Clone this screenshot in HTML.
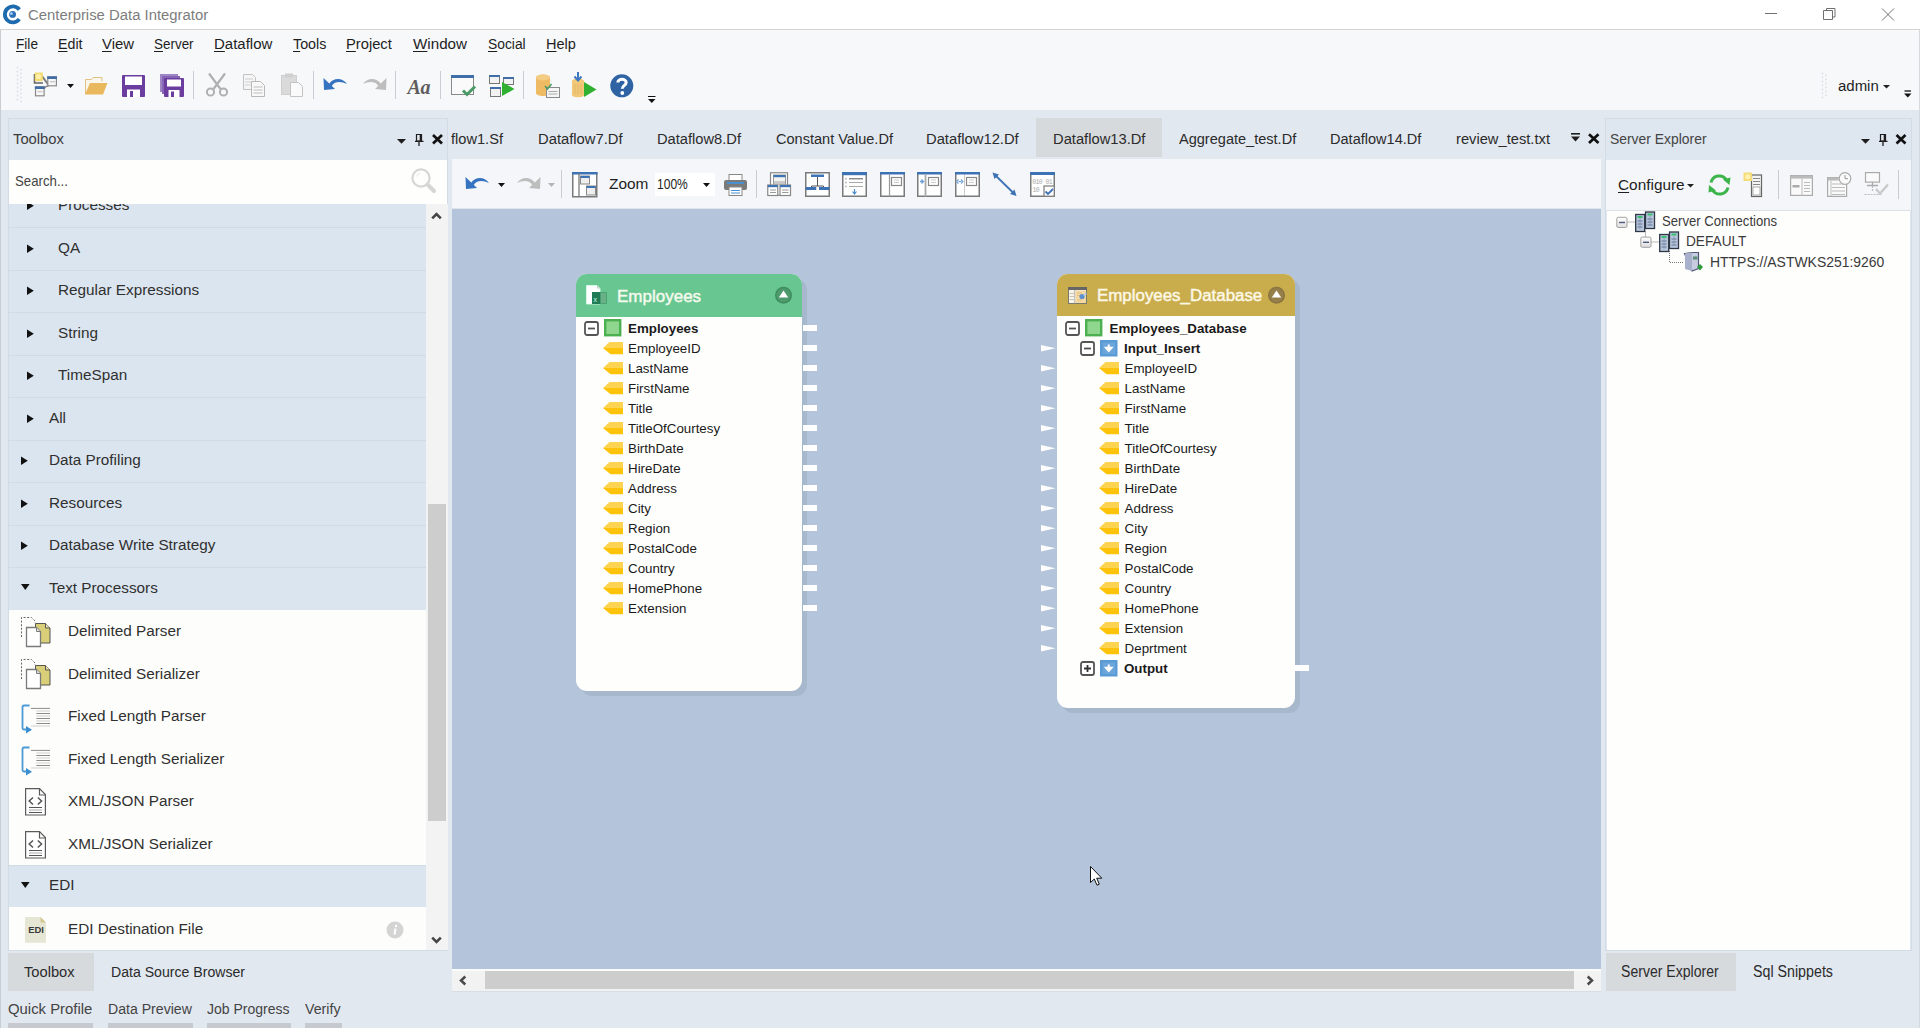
<!DOCTYPE html>
<html><head><meta charset="utf-8">
<style>
*{margin:0;padding:0;box-sizing:border-box}
html,body{width:1920px;height:1028px;overflow:hidden}
body{position:relative;background:#e2e8f0;font-family:"Liberation Sans",sans-serif;color:#1e1e1e}
.a{position:absolute}
.t{position:absolute;white-space:nowrap;line-height:1}
svg{position:absolute;overflow:visible}
u{text-decoration:underline;text-underline-offset:2px;text-decoration-thickness:1px}
</style></head><body>

<!-- TITLE BAR -->
<div class="a" style="left:0;top:0;width:1920px;height:29px;background:#fff"></div>
<div class="a" style="left:0;top:29px;width:1920px;height:1px;background:#d4d4d4"></div>
<svg style="left:3px;top:5px" width="19" height="19" viewBox="0 0 19 19">
 <path d="M16.3 4.6 A8 8 0 1 0 16.3 14.2" fill="none" stroke="#1d6aae" stroke-width="3.8"/>
 <circle cx="9.6" cy="9.4" r="3.4" fill="#2c6fb5"/><circle cx="8.4" cy="8.6" r="1.5" fill="#9cc8ec"/>
</svg>
<div class="t" style="left:27.80px;top:8.32px;font-size:14.27px;color:#7d7d7d;transform:scaleX(1.0424);transform-origin:0 0">Centerprise Data Integrator</div>
<svg style="left:1765px;top:8px" width="130" height="13" viewBox="0 0 130 13">
 <path d="M0 5.5H12" stroke="#707070" stroke-width="1" fill="none"/>
 <path d="M58.5 2.5h9v9h-9z M61.5 2.5V0.5h8.5v8.5h-2" stroke="#707070" stroke-width="1" fill="none"/>
 <path d="M117 0.5L129 12.5M129 0.5L117 12.5" stroke="#707070" stroke-width="1" fill="none"/>
</svg>

<!-- MENU + TOOLBAR -->
<div class="a" style="left:1919px;top:30px;width:1px;height:998px;background:#d6d9dd;z-index:5"></div>
<div class="a" style="left:0;top:30px;width:1920px;height:80px;background:#f7f8fa"></div>
<div class="a" style="left:0;top:30px;width:1px;height:998px;background:#c9ccd1"></div>
<div id="menu" style="font-size:15px;color:#1e1e1e">
 <div class="t" style="left:15.50px;top:36.98px;font-size:14.68px;color:#1e1e1e;transform:scaleX(0.9302);transform-origin:0 0"><u>F</u>ile</div>
 <div class="t" style="left:57.50px;top:36.98px;font-size:14.68px;color:#1e1e1e;transform:scaleX(0.9687);transform-origin:0 0"><u>E</u>dit</div>
 <div class="t" style="left:102.00px;top:36.98px;font-size:14.68px;color:#1e1e1e;transform:scaleX(1.0143);transform-origin:0 0"><u>V</u>iew</div>
 <div class="t" style="left:154.00px;top:36.98px;font-size:14.68px;color:#1e1e1e;transform:scaleX(0.9160);transform-origin:0 0"><u>S</u>erver</div>
 <div class="t" style="left:214.00px;top:36.98px;font-size:14.68px;color:#1e1e1e;transform:scaleX(1.0209);transform-origin:0 0"><u>D</u>ataflow</div>
 <div class="t" style="left:292.60px;top:36.98px;font-size:14.68px;color:#1e1e1e;transform:scaleX(0.9748);transform-origin:0 0"><u>T</u>ools</div>
 <div class="t" style="left:346.25px;top:36.98px;font-size:14.68px;color:#1e1e1e;transform:scaleX(1.0026);transform-origin:0 0"><u>P</u>roject</div>
 <div class="t" style="left:413.00px;top:36.98px;font-size:14.68px;color:#1e1e1e;transform:scaleX(1.0344);transform-origin:0 0"><u>W</u>indow</div>
 <div class="t" style="left:487.80px;top:36.98px;font-size:14.68px;color:#1e1e1e;transform:scaleX(0.9430);transform-origin:0 0"><u>S</u>ocial</div>
 <div class="t" style="left:546.40px;top:36.98px;font-size:14.68px;color:#1e1e1e;transform:scaleX(0.9905);transform-origin:0 0"><u>H</u>elp</div>
</div>

<!--TOOLBAR-->
<!-- grip -->
<svg style="left:16px;top:66px" width="7" height="37" viewBox="0 0 7 37">
 <g fill="#dcdfe4"><circle cx="1.5" cy="1.5" r="0.9"/><circle cx="5" cy="3.5" r="0.9"/><circle cx="1.5" cy="5.5" r="0.9"/><circle cx="5" cy="7.5" r="0.9"/><circle cx="1.5" cy="9.5" r="0.9"/><circle cx="5" cy="11.5" r="0.9"/><circle cx="1.5" cy="13.5" r="0.9"/><circle cx="5" cy="15.5" r="0.9"/><circle cx="1.5" cy="17.5" r="0.9"/><circle cx="5" cy="19.5" r="0.9"/><circle cx="1.5" cy="21.5" r="0.9"/><circle cx="5" cy="23.5" r="0.9"/><circle cx="1.5" cy="25.5" r="0.9"/><circle cx="5" cy="27.5" r="0.9"/><circle cx="1.5" cy="29.5" r="0.9"/><circle cx="5" cy="31.5" r="0.9"/><circle cx="1.5" cy="33.5" r="0.9"/><circle cx="5" cy="35.5" r="0.9"/></g>
</svg>
<!-- new -->
<svg style="left:33px;top:72px" width="25" height="25" viewBox="0 0 25 25">
 <path d="M9 4L15.5 13" stroke="#7a7a7a" stroke-width="2" fill="none"/>
 <path d="M11 16.5Q12.5 14 15.5 14" stroke="#8a8a8a" stroke-width="1.6" fill="none"/>
 <path d="M1.5 2V11h8.5" fill="#ececec" stroke="#666" stroke-width="1.6"/>
 <rect x="1.8" y="0.5" width="8" height="8.5" fill="#f3dc72"/><circle cx="5.5" cy="4.5" r="2.6" fill="#fff0a8"/>
 <rect x="14.8" y="4.8" width="8.6" height="9" fill="#f8f8f8" stroke="#8a8a8a" stroke-width="1.2"/><rect x="14.2" y="4.4" width="9.8" height="2.6" fill="#3f6ea8"/>
 <rect x="2.5" y="14.8" width="8.6" height="9" fill="#f8f8f8" stroke="#8a8a8a" stroke-width="1.2"/><rect x="1.9" y="14.4" width="9.8" height="2.6" fill="#3f6ea8"/>
 <rect x="4.5" y="19" width="5" height="1.3" fill="#c8c8c8"/><rect x="17" y="9" width="5" height="1.3" fill="#c8c8c8"/>
</svg>
<svg style="left:67px;top:84px" width="8" height="5" viewBox="0 0 8 5"><path d="M0 0H7L3.5 4z" fill="#111"/></svg>
<!-- open folder -->
<svg style="left:84px;top:76px" width="24" height="19" viewBox="0 0 24 19">
 <path d="M1.5 18V3.5h6l1.5-2h9v4" fill="#fbf6ec" stroke="#e2c184" stroke-width="1"/>
 <path d="M1 18.5L6 7h17.5L19 18.5z" fill="#e9b75c"/>
</svg>
<!-- save -->
<svg style="left:122px;top:75px" width="23" height="22" viewBox="0 0 23 22">
 <rect x="0" y="0" width="23" height="22" rx="1" fill="#6b3d9e"/>
 <rect x="3" y="1.5" width="17" height="8.5" fill="#fff"/>
 <rect x="5" y="14.5" width="13" height="7.5" fill="#fff"/><rect x="8" y="16" width="3" height="6" fill="#6b3d9e"/>
</svg>
<!-- save all -->
<svg style="left:160px;top:74px" width="24" height="23" viewBox="0 0 24 23">
 <rect x="0" y="0" width="18" height="18" fill="#9f86c4"/>
 <rect x="2" y="2" width="18" height="18" fill="#8566b5"/>
 <rect x="4" y="4" width="20" height="19" rx="1" fill="#6b3d9e"/>
 <rect x="7" y="5.5" width="14" height="7" fill="#fff"/>
 <rect x="8.5" y="16" width="11" height="7" fill="#fff"/><rect x="11" y="17.5" width="3" height="5.5" fill="#6b3d9e"/>
</svg>
<div class="a" style="left:193px;top:71px;width:1px;height:28px;background:#c9ccd2"></div>
<!-- cut -->
<svg style="left:205px;top:73px" width="24" height="24" viewBox="0 0 24 24">
 <path d="M4 0.5L15.5 16M20 0.5L8.5 16" stroke="#b0b0b0" stroke-width="2.2" fill="none"/>
 <circle cx="5.5" cy="19" r="3.6" fill="none" stroke="#b0b0b0" stroke-width="2"/>
 <circle cx="18.5" cy="19" r="3.6" fill="none" stroke="#b0b0b0" stroke-width="2"/>
</svg>
<!-- copy -->
<svg style="left:243px;top:74px" width="23" height="23" viewBox="0 0 23 23">
 <path d="M0.5 0.5h9l3 3v12h-12z" fill="#f6f6f6" stroke="#c2c2c2"/>
 <path d="M2 5h8M2 8h8M2 11h8" stroke="#d0d0d0"/>
 <path d="M8.5 7.5h9l4 4v11h-13z" fill="#f8f8f8" stroke="#b8b8b8"/>
 <path d="M10.5 13h9M10.5 16h9M10.5 19h9" stroke="#bfbfbf"/>
</svg>
<!-- paste -->
<svg style="left:281px;top:73px" width="23" height="24" viewBox="0 0 23 24">
 <rect x="0.5" y="2.5" width="15" height="19" fill="#dadada" stroke="#cfcfcf"/>
 <rect x="4" y="0.5" width="8" height="4" fill="#cfcfcf"/>
 <path d="M9.5 9.5h8l4 4v10h-12z" fill="#fafafa" stroke="#c4c4c4"/>
</svg>
<div class="a" style="left:313px;top:71px;width:1px;height:28px;background:#c9ccd2"></div>
<!-- undo -->
<svg style="left:323px;top:76px" width="25" height="15" viewBox="0 0 25 15">
 <path d="M6 8 C10 2 19 1 24 8 C18 5 11 5 8.5 10.5z" fill="#3573c0"/>
 <path d="M0.5 2 L1 14 L12 13z" fill="#3573c0"/>
</svg>
<!-- redo -->
<svg style="left:362px;top:76px" width="25" height="15" viewBox="0 0 25 15">
 <path d="M19 8 C15 2 6 1 1 8 C7 5 14 5 16.5 10.5z" fill="#bdbdbd"/>
 <path d="M24.5 2 L24 14 L13 13z" fill="#bdbdbd"/>
</svg>
<div class="a" style="left:395px;top:71px;width:1px;height:28px;background:#c9ccd2"></div>
<div class="t" style="left:407.5px;top:77px;font-family:'Liberation Serif',serif;font-style:italic;font-weight:bold;font-size:20px;color:#5e5e5e;letter-spacing:-0.3px">Aa</div>
<div class="a" style="left:440px;top:71px;width:1px;height:28px;background:#c9ccd2"></div>
<!-- verify -->
<svg style="left:451px;top:75px" width="25" height="22" viewBox="0 0 25 22">
 <rect x="0.5" y="0.5" width="22" height="19" fill="#fafafa" stroke="#8a8a8a"/>
 <rect x="0" y="0" width="23" height="3" fill="#3f6ea8"/>
 <path d="M12 15.5l4 4l8-8" stroke="#4a9a68" stroke-width="3" fill="none"/>
</svg>
<!-- run -->
<svg style="left:489px;top:75px" width="26" height="22" viewBox="0 0 26 22">
 <rect x="0.5" y="0.5" width="10" height="8" fill="#f2f2f2" stroke="#777"/><rect x="0" y="0" width="11" height="2" fill="#3f6ea8"/>
 <rect x="14.5" y="2.5" width="10" height="7" fill="#f2f2f2" stroke="#777"/><rect x="14" y="2" width="11" height="2" fill="#3f6ea8"/>
 <rect x="1.5" y="12.5" width="10" height="9" fill="#f2f2f2" stroke="#777"/><rect x="1" y="12" width="11" height="2" fill="#3f6ea8"/>
 <path d="M13 7L25.5 14L13 21z" fill="#2fb030"/>
</svg>
<div class="a" style="left:523px;top:71px;width:1px;height:28px;background:#c9ccd2"></div>
<!-- db -->
<svg style="left:536px;top:74px" width="24" height="24" viewBox="0 0 24 24">
 <path d="M0 3.5 C0 -0.5 14 -0.5 14 3.5 V19 C14 23 0 23 0 19z" fill="#eebb62"/>
 <ellipse cx="7" cy="3.5" rx="7" ry="3" fill="#f4cc84"/>
 <rect x="10.5" y="13.5" width="13" height="10" fill="#f6f6f6" stroke="#8a8a8a"/>
 <path d="M12.5 17.5h9M12.5 20h9" stroke="#aaa"/>
 <path d="M9 12l2.5 3l4-5" stroke="#4a9a68" stroke-width="1.6" fill="none"/>
</svg>
<!-- transfer -->
<svg style="left:572px;top:72px" width="25" height="26" viewBox="0 0 25 26">
 <path d="M0 9 C0 6 12 6 12 9 V23 C12 26 0 26 0 23z" fill="#f0c878"/>
 <path d="M3 12v10M6 12v10M9 12v10" stroke="#e0b060" stroke-width="0.8"/>
 <path d="M6 0v8M2.5 4.5L6 8.5L9.5 4.5" stroke="#3f78c0" stroke-width="2" fill="none"/>
 <path d="M12 10L24.5 17.5L12 25z" fill="#2fb030"/>
</svg>
<!-- help -->
<svg style="left:610px;top:74px" width="24" height="24" viewBox="0 0 24 24">
 <circle cx="11.8" cy="11.8" r="11.5" fill="#2f63a4"/>
 <path d="M7.8 8.6 C7.8 4.2 16.2 4.2 16.2 8.6 C16.2 11.5 12.3 11.4 12.3 14.8" stroke="#fff" stroke-width="3" fill="none"/>
 <circle cx="12.3" cy="19" r="1.9" fill="#fff"/>
</svg>
<svg style="left:648px;top:96px" width="8" height="9" viewBox="0 0 8 9"><path d="M0 0.5H7.5" stroke="#111" stroke-width="1"/><path d="M0 3H7.5L3.75 7z" fill="#111"/></svg>

<!-- right side admin -->
<svg style="left:1821px;top:72px" width="7" height="27" viewBox="0 0 7 27">
 <g fill="#dde0e5"><circle cx="1.5" cy="1.5" r="0.9"/><circle cx="5" cy="3.5" r="0.9"/><circle cx="1.5" cy="5.5" r="0.9"/><circle cx="5" cy="7.5" r="0.9"/><circle cx="1.5" cy="9.5" r="0.9"/><circle cx="5" cy="11.5" r="0.9"/><circle cx="1.5" cy="13.5" r="0.9"/><circle cx="5" cy="15.5" r="0.9"/><circle cx="1.5" cy="17.5" r="0.9"/><circle cx="5" cy="19.5" r="0.9"/><circle cx="1.5" cy="21.5" r="0.9"/><circle cx="5" cy="23.5" r="0.9"/><circle cx="1.5" cy="25.5" r="0.9"/></g>
</svg>
<div class="t" style="left:1838.20px;top:77.63px;font-size:15.09px;color:#1e1e1e;transform:scaleX(0.9928);transform-origin:0 0">admin</div>
<svg style="left:1883px;top:85px" width="8" height="5" viewBox="0 0 8 5"><path d="M0 0H7L3.5 3.5z" fill="#222"/></svg>
<svg style="left:1904px;top:90px" width="8" height="9" viewBox="0 0 8 9"><path d="M0.5 1H7" stroke="#111" stroke-width="1.3"/><path d="M0 3.5H7.5L3.75 7.5z" fill="#111"/></svg>


<!--TOOLBOX-->
<!-- TOOLBOX PANEL -->
<div class="a" style="left:8px;top:118px;width:440px;height:833px;background:#dee6ef;border:1px solid #d3dbe4"></div>
<div class="t" style="left:13.00px;top:131.45px;font-size:15.29px;color:#3c3c3c;transform:scaleX(0.9674);transform-origin:0 0">Toolbox</div>
<svg style="left:397px;top:134px" width="46" height="12" viewBox="0 0 46 12">
 <path d="M0 5H9L4.5 9.8z" fill="#1e1e1e"/>
 <path d="M19.5 0.5h5v6.5h-5z" fill="none" stroke="#1e1e1e" stroke-width="1.2"/><path d="M23.5 0.5v6.5" stroke="#1e1e1e" stroke-width="1.6"/>
 <path d="M18 7.3h8.5M22 7.3v4.7" stroke="#1e1e1e" stroke-width="1.3"/>
 <path d="M36 1L45 9.5M45 1L36 9.5" stroke="#111" stroke-width="2.7"/>
</svg>
<!-- search -->
<div class="a" style="left:9px;top:160px;width:438px;height:44px;background:#fefefd"></div>
<div class="t" style="left:15.20px;top:173.86px;font-size:14.81px;color:#444;transform:scaleX(0.8939);transform-origin:0 0">Search...</div>
<svg style="left:410px;top:167px" width="28" height="28" viewBox="0 0 28 28">
 <circle cx="11" cy="11" r="8.6" fill="none" stroke="#d6d6d6" stroke-width="2.2"/>
 <path d="M17.5 17.5L24 24" stroke="#d6d6d6" stroke-width="4" stroke-linecap="round"/>
 <path d="M6.5 9.5 A5 5 0 0 1 10 6" stroke="#e6e6e6" stroke-width="1" fill="none"/>
</svg>
<!-- list -->
<div class="a" style="left:9px;top:204px;width:417px;height:746px;overflow:hidden">
 <div id="tlist" class="a" style="left:0;top:-19.5px;width:417px;font-size:15.3px;color:#303030">
<div class="a" style="position:relative;height:42.5px;background:#dbe5ef;border-top:1px solid #d2dbe3"><svg style="left:18px;top:15.5px" width="8" height="10" viewBox="0 0 8 10"><path d="M0 0.5L6.8 4.8L0 9.1z" fill="#111"/></svg><div class="t" style="left:49px;top:11.5px">Processes</div></div>
<div class="a" style="position:relative;height:42.5px;background:#dbe5ef;border-top:1px solid #d2dbe3"><svg style="left:18px;top:15.5px" width="8" height="10" viewBox="0 0 8 10"><path d="M0 0.5L6.8 4.8L0 9.1z" fill="#111"/></svg><div class="t" style="left:49px;top:11.5px">QA</div></div>
<div class="a" style="position:relative;height:42.5px;background:#dbe5ef;border-top:1px solid #d2dbe3"><svg style="left:18px;top:15.5px" width="8" height="10" viewBox="0 0 8 10"><path d="M0 0.5L6.8 4.8L0 9.1z" fill="#111"/></svg><div class="t" style="left:49px;top:11.5px">Regular Expressions</div></div>
<div class="a" style="position:relative;height:42.5px;background:#dbe5ef;border-top:1px solid #d2dbe3"><svg style="left:18px;top:15.5px" width="8" height="10" viewBox="0 0 8 10"><path d="M0 0.5L6.8 4.8L0 9.1z" fill="#111"/></svg><div class="t" style="left:49px;top:11.5px">String</div></div>
<div class="a" style="position:relative;height:42.5px;background:#dbe5ef;border-top:1px solid #d2dbe3"><svg style="left:18px;top:15.5px" width="8" height="10" viewBox="0 0 8 10"><path d="M0 0.5L6.8 4.8L0 9.1z" fill="#111"/></svg><div class="t" style="left:49px;top:11.5px">TimeSpan</div></div>
<div class="a" style="position:relative;height:42.5px;background:#dbe5ef;border-top:1px solid #d2dbe3"><svg style="left:18px;top:15.5px" width="8" height="10" viewBox="0 0 8 10"><path d="M0 0.5L6.8 4.8L0 9.1z" fill="#111"/></svg><div class="t" style="left:40px;top:11.5px">All</div></div>
<div class="a" style="position:relative;height:42.5px;background:#dbe5ef;border-top:1px solid #d2dbe3"><svg style="left:12px;top:15.5px" width="8" height="10" viewBox="0 0 8 10"><path d="M0 0.5L6.8 4.8L0 9.1z" fill="#111"/></svg><div class="t" style="left:40px;top:11.5px">Data Profiling</div></div>
<div class="a" style="position:relative;height:42.5px;background:#dbe5ef;border-top:1px solid #d2dbe3"><svg style="left:12px;top:15.5px" width="8" height="10" viewBox="0 0 8 10"><path d="M0 0.5L6.8 4.8L0 9.1z" fill="#111"/></svg><div class="t" style="left:40px;top:11.5px">Resources</div></div>
<div class="a" style="position:relative;height:42.5px;background:#dbe5ef;border-top:1px solid #d2dbe3"><svg style="left:12px;top:15.5px" width="8" height="10" viewBox="0 0 8 10"><path d="M0 0.5L6.8 4.8L0 9.1z" fill="#111"/></svg><div class="t" style="left:40px;top:11.5px">Database Write Strategy</div></div>
<div class="a" style="position:relative;height:42.5px;background:#dbe5ef;border-top:1px solid #d2dbe3"><svg style="left:12px;top:16px" width="10" height="7" viewBox="0 0 10 7"><path d="M0 0H8.6L4.3 6z" fill="#111"/></svg><div class="t" style="left:40px;top:11.5px">Text Processors</div></div>
<div class="a" style="position:relative;height:42.5px;background:#fdfdfb"><svg style="left:12px;top:7px" width="32" height="32" viewBox="0 0 32 32"><path d="M0.5 20V0.5h10l3.5 3.5v2" fill="none" stroke="#666" stroke-dasharray="2 1.6"/><path d="M14.5 6.5h10l4.5 4.5v15h-14.5z" fill="#d9cf78" stroke="#555"/><path d="M24.5 6.5v4.5h4.5" fill="#e8e0b0" stroke="#555"/><path d="M5.5 10.5h10l4 4v15h-14z" fill="#fff" stroke="#7a7a7a" stroke-width="1.3"/><path d="M15.5 10.5v4h4" fill="#ddd" stroke="#7a7a7a"/></svg><div class="t" style="left:59px;top:13.5px">Delimited Parser</div></div>
<div class="a" style="position:relative;height:42.5px;background:#fdfdfb"><svg style="left:12px;top:7px" width="32" height="32" viewBox="0 0 32 32"><path d="M0.5 20V0.5h10l3.5 3.5v2" fill="none" stroke="#666" stroke-dasharray="2 1.6"/><path d="M14.5 6.5h10l4.5 4.5v15h-14.5z" fill="#d9cf78" stroke="#555"/><path d="M24.5 6.5v4.5h4.5" fill="#e8e0b0" stroke="#555"/><path d="M5.5 10.5h10l4 4v15h-14z" fill="#fff" stroke="#7a7a7a" stroke-width="1.3"/><path d="M15.5 10.5v4h4" fill="#ddd" stroke="#7a7a7a"/></svg><div class="t" style="left:59px;top:13.5px">Delimited Serializer</div></div>
<div class="a" style="position:relative;height:42.5px;background:#fdfdfb"><svg style="left:12px;top:9px" width="32" height="30" viewBox="0 0 32 30"><path d="M8.5 1.5H3Q1.5 1.5 1.5 3V24Q1.5 25.5 3 25.5H6" fill="none" stroke="#4b9ad6" stroke-width="1.8"/><path d="M5 22L11 25.7L5 29.5z" fill="#3a8ed2"/><g stroke-width="1"><path d="M10 4.4H29M15.4 9.5H29M15.4 14.5H29M15.4 19.5H29" stroke="#8c8c8c"/><path d="M15.4 7H29M15.4 12H29M15.4 17H29M10 22H29" stroke="#cfcfcf"/></g></svg><div class="t" style="left:59px;top:13.5px">Fixed Length Parser</div></div>
<div class="a" style="position:relative;height:42.5px;background:#fdfdfb"><svg style="left:12px;top:9px" width="32" height="30" viewBox="0 0 32 30"><path d="M8.5 1.5H3Q1.5 1.5 1.5 3V24Q1.5 25.5 3 25.5H6" fill="none" stroke="#4b9ad6" stroke-width="1.8"/><path d="M5 22L11 25.7L5 29.5z" fill="#3a8ed2"/><g stroke-width="1"><path d="M10 4.4H29M15.4 9.5H29M15.4 14.5H29M15.4 19.5H29" stroke="#8c8c8c"/><path d="M15.4 7H29M15.4 12H29M15.4 17H29M10 22H29" stroke="#cfcfcf"/></g></svg><div class="t" style="left:59px;top:13.5px">Fixed Length Serializer</div></div>
<div class="a" style="position:relative;height:42.5px;background:#fdfdfb"><svg style="left:16px;top:8.5px" width="22" height="28" viewBox="0 0 22 28"><path d="M0.6 0.6H14.5L20.4 6.5V27H0.6z" fill="#fff" stroke="#5a5a5a" stroke-width="1.2"/><path d="M14.5 0.6V7H20.4" fill="none" stroke="#5a5a5a" stroke-width="1.2"/><path d="M8 9.5L4.2 13L8 16.5M12.8 9.5L16.6 13L12.8 16.5" fill="none" stroke="#555" stroke-width="1.5"/><path d="M4 19.5H17M4 24.5H17" stroke="#555"/><path d="M4 22H17" stroke="#aaa"/></svg><div class="t" style="left:59px;top:13.5px">XML/JSON Parser</div></div>
<div class="a" style="position:relative;height:42.5px;background:#fdfdfb"><svg style="left:16px;top:8.5px" width="22" height="28" viewBox="0 0 22 28"><path d="M0.6 0.6H14.5L20.4 6.5V27H0.6z" fill="#fff" stroke="#5a5a5a" stroke-width="1.2"/><path d="M14.5 0.6V7H20.4" fill="none" stroke="#5a5a5a" stroke-width="1.2"/><path d="M8 9.5L4.2 13L8 16.5M12.8 9.5L16.6 13L12.8 16.5" fill="none" stroke="#555" stroke-width="1.5"/><path d="M4 19.5H17M4 24.5H17" stroke="#555"/><path d="M4 22H17" stroke="#aaa"/></svg><div class="t" style="left:59px;top:13.5px">XML/JSON Serializer</div></div>
<div class="a" style="position:relative;height:42.5px;background:#dbe5ef;border-top:1px solid #d2dbe3"><svg style="left:12px;top:16px" width="10" height="7" viewBox="0 0 10 7"><path d="M0 0H8.6L4.3 6z" fill="#111"/></svg><div class="t" style="left:40px;top:11.5px">EDI</div></div>
<div class="a" style="position:relative;height:42.5px;background:#fdfdfb"><svg style="left:16px;top:10px" width="22" height="27" viewBox="0 0 22 27"><path d="M0 0h15.5l5.5 5.5V25.7H0z" fill="#e6e6d4"/><path d="M15.5 0v5.5h5.5z" fill="#d2c890"/><text x="3.2" y="16" font-family="Liberation Sans" font-weight="bold" font-size="9.6" fill="#3a3a3a" textLength="15.8" lengthAdjust="spacingAndGlyphs">EDI</text></svg><div class="t" style="left:59px;top:13.5px">EDI Destination File</div></div>
 </div>
</div>
<svg style="left:386px;top:921px" width="18" height="18" viewBox="0 0 18 18"><circle cx="9" cy="9" r="8.5" fill="#d4d4d4"/><path d="M9.5 7.5L8.5 13.5" stroke="#fff" stroke-width="2"/><circle cx="10" cy="5" r="1.2" fill="#fff"/></svg>
<!-- toolbox scrollbar -->
<div class="a" style="left:426px;top:204px;width:22px;height:746px;background:#f3f3f3"></div>
<div class="a" style="left:428px;top:504px;width:18px;height:317px;background:#cdcdcd"></div>
<svg style="left:431px;top:211px" width="11" height="9" viewBox="0 0 11 9"><path d="M1.2 7.3L5.5 3L9.8 7.3" fill="none" stroke="#444" stroke-width="2.6"/></svg>
<svg style="left:431px;top:936px" width="11" height="9" viewBox="0 0 11 9"><path d="M1.2 1.7L5.5 6L9.8 1.7" fill="none" stroke="#444" stroke-width="2.6"/></svg>
<!-- bottom tabs -->
<div class="a" style="left:8px;top:953px;width:86px;height:38px;background:#d7dadd"></div>
<div class="t" style="left:24.40px;top:964.98px;font-size:14.68px;color:#2b2b2b;transform:scaleX(1.0002);transform-origin:0 0">Toolbox</div>
<div class="t" style="left:110.70px;top:964.98px;font-size:14.68px;color:#2b2b2b;transform:scaleX(0.9613);transform-origin:0 0">Data Source Browser</div>
<div class="t" style="left:7.90px;top:1001.98px;font-size:14.68px;color:#444;transform:scaleX(1.0144);transform-origin:0 0">Quick Profile</div>
<div class="t" style="left:108.40px;top:1001.98px;font-size:14.68px;color:#444;transform:scaleX(0.9612);transform-origin:0 0">Data Preview</div>
<div class="t" style="left:207.30px;top:1001.98px;font-size:14.68px;color:#444;transform:scaleX(0.9552);transform-origin:0 0">Job Progress</div>
<div class="t" style="left:304.90px;top:1001.98px;font-size:14.68px;color:#444;transform:scaleX(0.9698);transform-origin:0 0">Verify</div>
<div class="a" style="left:8px;top:1023px;width:85px;height:5px;background:#c6c9cd"></div>
<div class="a" style="left:108px;top:1023px;width:85px;height:5px;background:#c6c9cd"></div>
<div class="a" style="left:207px;top:1023px;width:84px;height:5px;background:#c6c9cd"></div>
<div class="a" style="left:305px;top:1023px;width:37px;height:5px;background:#c6c9cd"></div>


<!--CENTER-->
<!-- doc tabs -->
<div class="a" style="left:1036px;top:118px;width:126px;height:39px;background:#d7dadd"></div>
<div class="t" style="left:451.00px;top:131.98px;font-size:14.68px;color:#2b2b2b;transform:scaleX(0.9960);transform-origin:0 0">flow1.Sf</div>
<div class="t" style="left:538.10px;top:131.98px;font-size:14.68px;color:#2b2b2b;transform:scaleX(1.0069);transform-origin:0 0">Dataflow7.Df</div>
<div class="t" style="left:657.00px;top:131.98px;font-size:14.68px;color:#2b2b2b;transform:scaleX(0.9997);transform-origin:0 0">Dataflow8.Df</div>
<div class="t" style="left:775.50px;top:131.98px;font-size:14.68px;color:#2b2b2b;transform:scaleX(0.9913);transform-origin:0 0">Constant Value.Df</div>
<div class="t" style="left:926.00px;top:131.98px;font-size:14.68px;color:#2b2b2b;transform:scaleX(1.0061);transform-origin:0 0">Dataflow12.Df</div>
<div class="t" style="left:1052.50px;top:131.98px;font-size:14.68px;color:#2b2b2b;transform:scaleX(1.0034);transform-origin:0 0">Dataflow13.Df</div>
<div class="t" style="left:1178.75px;top:131.98px;font-size:14.68px;color:#2b2b2b;transform:scaleX(0.9910);transform-origin:0 0">Aggregate_test.Df</div>
<div class="t" style="left:1330.30px;top:131.98px;font-size:14.68px;color:#2b2b2b;transform:scaleX(0.9915);transform-origin:0 0">Dataflow14.Df</div>
<div class="t" style="left:1456.00px;top:131.98px;font-size:14.68px;color:#2b2b2b;transform:scaleX(1.0021);transform-origin:0 0">review_test.txt</div>
<svg style="left:1571px;top:133px" width="30" height="11" viewBox="0 0 30 11">
 <path d="M0 0.8H9" stroke="#1e1e1e" stroke-width="1.6"/><path d="M0 3.5H9L4.5 8.5z" fill="#1e1e1e"/>
 <path d="M18 1.2L27.5 10M27.5 1.2L18 10" stroke="#111" stroke-width="2.7"/>
</svg>
<div class="a" style="left:452px;top:159px;width:1149px;height:50px;background:#f5f6f9"></div>
<div class="a" style="left:452px;top:208px;width:1149px;height:1px;background:#dfe4ea"></div>
<svg style="left:465px;top:175px" width="25" height="15" viewBox="0 0 25 15">
 <path d="M6 8 C10 2 19 1 24 8 C18 5 11 5 8.5 10.5z" fill="#3573c0"/>
 <path d="M0.5 2 L1 14 L12 13z" fill="#3573c0"/>
</svg>
<svg style="left:498px;top:183px" width="8" height="5" viewBox="0 0 8 5"><path d="M0 0H7L3.5 4z" fill="#111"/></svg>
<svg style="left:516px;top:175px" width="25" height="15" viewBox="0 0 25 15">
 <path d="M19 8 C15 2 6 1 1 8 C7 5 14 5 16.5 10.5z" fill="#bdbdbd"/>
 <path d="M24.5 2 L24 14 L13 13z" fill="#bdbdbd"/>
</svg>
<svg style="left:548px;top:183px" width="8" height="5" viewBox="0 0 8 5"><path d="M0 0H7L3.5 4z" fill="#b5b5b5"/></svg>
<div class="a" style="left:561px;top:170px;width:1px;height:28px;background:#c9ccd2"></div>
<svg style="left:572px;top:172px" width="26" height="26" viewBox="0 0 26 26">
 <rect x="0.75" y="0.75" width="24" height="24" fill="#fff" stroke="#7a7a7a" stroke-width="1.5"/>
 <rect x="0" y="0" width="25.5" height="2.5" fill="#3d72b4"/>
 <path d="M7 1v24" stroke="#7a7a7a" stroke-width="1.3"/>
 <rect x="8.5" y="4" width="9" height="8" fill="#eee" stroke="#888"/><rect x="8.5" y="4" width="9" height="2" fill="#3d72b4"/>
 <rect x="14.5" y="14" width="9" height="9" fill="#eee" stroke="#888"/><rect x="14.5" y="14" width="9" height="2" fill="#3d72b4"/>
</svg>
<div class="t" style="left:608.75px;top:177.09px;font-size:14.54px;color:#1e1e1e;transform:scaleX(1.0601);transform-origin:0 0">Zoom</div>
<div class="a" style="left:655px;top:173px;width:60px;height:23px;background:#fff"></div>
<div class="t" style="left:657.20px;top:177.79px;font-size:13.72px;color:#1e1e1e;transform:scaleX(0.8779);transform-origin:0 0">100%</div>
<svg style="left:703px;top:183px" width="8" height="5" viewBox="0 0 8 5"><path d="M0 0H7L3.5 4z" fill="#111"/></svg>
<svg style="left:724px;top:174px" width="23" height="22" viewBox="0 0 23 22">
 <rect x="5" y="0.5" width="13" height="7" fill="#fff" stroke="#888"/>
 <rect x="0" y="6" width="23" height="10" rx="2" fill="#7a7a7a"/>
 <rect x="3" y="8" width="17" height="2" fill="#4a90d0"/>
 <rect x="5" y="13" width="13" height="8.5" fill="#fff" stroke="#888"/>
 <path d="M7 16.5h9M7 19h9" stroke="#4a90d0"/>
</svg>
<div class="a" style="left:756px;top:170px;width:1px;height:28px;background:#c9ccd2"></div>

<svg style="left:767px;top:172px" width="25" height="25" viewBox="0 0 25 25"><rect x="3.5" y="0.75" width="17" height="22.5" fill="#fff" stroke="#888" stroke-width="1.2"/>
 <rect x="6.5" y="3" width="12" height="9" fill="#f2f2f2" stroke="#999"/><rect x="6.5" y="3" width="12" height="2.2" fill="#3d72b4"/>
 <path d="M7 10h11" stroke="#bbb" stroke-width="1.5"/>
 <rect x="0.75" y="13" width="10" height="10.5" fill="#fff" stroke="#888" stroke-width="1.2"/><rect x="0.75" y="13" width="10" height="2.2" fill="#3d72b4"/>
 <rect x="13" y="13" width="10.5" height="10.5" fill="#fff" stroke="#888" stroke-width="1.2"/><rect x="13" y="13" width="10.5" height="2.2" fill="#3d72b4"/>
 <path d="M3 18h6M3 20.5h6M15 18h6.5M15 20.5h6.5" stroke="#999"/></svg>
<svg style="left:805px;top:172px" width="25" height="25" viewBox="0 0 25 25"><rect x="0.75" y="0.75" width="23.5" height="23.5" fill="#fff" stroke="#7a7a7a" stroke-width="1.5"/>
 <rect x="6" y="2.5" width="13" height="2.5" fill="#3d72b4"/>
 <path d="M12.5 5v9M6.5 14h12M6.5 14v2M18.5 14v2" stroke="#555" stroke-width="1"/>
 <rect x="0.75" y="15" width="10.5" height="3" fill="#3d72b4"/><rect x="14" y="15" width="10.5" height="3" fill="#3d72b4"/></svg>
<svg style="left:842px;top:172px" width="25" height="25" viewBox="0 0 25 25"><rect x="0.75" y="0.75" width="23.5" height="23.5" fill="#fff" stroke="#7a7a7a" stroke-width="1.5"/>
 <rect x="0" y="0" width="25" height="3.2" fill="#3d72b4"/>
 <circle cx="4" cy="6.8" r="1" fill="#bbb"/><circle cx="4" cy="10.5" r="1" fill="#bbb"/><circle cx="4" cy="14.5" r="1" fill="#bbb"/>
 <path d="M7 6.8h14" stroke="#555" stroke-width="1"/><path d="M7 10.5h14M7 14.5h14" stroke="#aaa" stroke-width="1"/>
 <path d="M12.5 17v5M10.5 19.5l2 2.5l2-2.5" stroke="#4a90d0" stroke-width="1.2" fill="none"/></svg>
<svg style="left:880px;top:172px" width="25" height="25" viewBox="0 0 25 25"><rect x="0.75" y="0.75" width="23.5" height="23.5" fill="#fff" stroke="#7a7a7a" stroke-width="1.5"/>
 <rect x="0" y="0" width="25" height="2.5" fill="#3d72b4"/>
 <path d="M9.5 2.5v22" stroke="#999" stroke-width="1.2"/>
 <rect x="11.5" y="5.5" width="10" height="8" fill="#fff" stroke="#888" stroke-width="1.2"/><path d="M14 8h5M14 10.5h5" stroke="#ccc"/></svg>
<svg style="left:917px;top:172px" width="25" height="25" viewBox="0 0 25 25"><rect x="0.75" y="0.75" width="23.5" height="23.5" fill="#fff" stroke="#7a7a7a" stroke-width="1.5"/>
 <rect x="0" y="0" width="25" height="2.5" fill="#3d72b4"/>
 <path d="M8.5 2.5v22" stroke="#aaa" stroke-width="1.8"/>
 <rect x="11.5" y="5.5" width="10" height="8" fill="#fff" stroke="#888" stroke-width="1.2"/><path d="M14 8h5M14 10.5h5" stroke="#ccc"/>
 <path d="M3 9.5h3M4.5 7.5l2 2l-2 2" stroke="#6aa0d8" stroke-width="1.3" fill="none"/></svg>
<svg style="left:955px;top:172px" width="25" height="25" viewBox="0 0 25 25"><rect x="0.75" y="0.75" width="23.5" height="23.5" fill="#fff" stroke="#7a7a7a" stroke-width="1.5"/>
 <rect x="0" y="0" width="25" height="2.5" fill="#3d72b4"/>
 <path d="M9.5 2.5v22" stroke="#999" stroke-width="1" stroke-dasharray="1 1"/>
 <rect x="11.5" y="5.5" width="10" height="8" fill="#fff" stroke="#888" stroke-width="1.2"/><path d="M14 8h5M14 10.5h5" stroke="#ccc"/>
 <path d="M1.5 9.5l2-2M1.5 9.5l2 2M6 7.5l2 2l-2 2M3.5 9.5h3" stroke="#6aa0d8" stroke-width="1.1" fill="none"/></svg>
<svg style="left:992px;top:172px" width="25" height="25" viewBox="0 0 25 25"><path d="M2.5 2.5L22 21.5" stroke="#3d72b4" stroke-width="1.8"/>
 <path d="M0.5 0.5L7 2.5L2.5 7z" fill="#3d72b4"/><path d="M24.5 24L18 22L22.5 17.5z" fill="#3d72b4"/></svg>
<svg style="left:1030px;top:172px" width="25" height="25" viewBox="0 0 25 25"><rect x="0.75" y="0.75" width="23.5" height="23.5" fill="#fff" stroke="#7a7a7a" stroke-width="1.5"/>
 <rect x="0" y="0" width="25" height="3" fill="#3d72b4"/>
 <text x="2.2" y="11.5" font-family="Liberation Mono" font-size="6.5" fill="#aaa" letter-spacing="-0.6">010 01</text>
 <text x="2.5" y="20" font-family="Liberation Mono" font-size="6.5" fill="#aaa" letter-spacing="-0.6">10</text>
 <rect x="14" y="14" width="10.25" height="10.25" fill="#fff" stroke="#7a7a7a" stroke-width="1.2"/>
 <path d="M15.5 19.5l2.5 2.5l5-5" stroke="#3d72b4" stroke-width="1.8" fill="none"/></svg>
<div class="a" style="left:452px;top:209px;width:1149px;height:760px;background:#b4c4da"></div>
<div class="a" style="left:452px;top:969px;width:1149px;height:23px;background:#f2f2f2;border-top:2px solid #fbfbfb;border-bottom:1px solid #d9dee4"></div>
<div class="a" style="left:485px;top:971px;width:1089px;height:18px;background:#cdcdcd"></div>
<svg style="left:458px;top:975px" width="9" height="11" viewBox="0 0 9 11"><path d="M7.3 1.5L3 5.5L7.3 9.5" fill="none" stroke="#4a4a4a" stroke-width="2.5"/></svg>
<svg style="left:1586px;top:975px" width="9" height="11" viewBox="0 0 9 11"><path d="M1.7 1.5L6 5.5L1.7 9.5" fill="none" stroke="#4a4a4a" stroke-width="2.5"/></svg>
<div class="a" style="left:576px;top:274px;width:226px;height:417px;border-radius:11px;background:#fefefc;box-shadow:5px 5px 0 #a7b7cc;overflow:hidden"><div class="a" style="left:0;top:0;width:226px;height:42.5px;background:#68c690"></div></div>
<svg style="left:586px;top:285px" width="22" height="20" viewBox="0 0 22 20"><path d="M0.5 0.5H11L14 3.5V19H0.5z" fill="#fff" stroke="#dfe" stroke-width="0.8"/><path d="M11 0.5V3.5H14" fill="#ccc"/><rect x="6" y="7" width="8.5" height="12" fill="#1f7a55"/><rect x="14.5" y="7.5" width="6" height="11" fill="#69b087" stroke="#2e8a5a" stroke-dasharray="1 1"/><text x="7.5" y="16.5" font-family="Liberation Sans" font-size="7" fill="#cfe">x</text></svg>
<div class="t" style="left:617px;top:287.5px;font-size:17px;color:#f4faee;-webkit-text-stroke:0.45px #f4faee">Employees</div>
<svg style="left:774px;top:286px" width="19" height="19" viewBox="0 0 19 19"><circle cx="9.5" cy="9.2" r="8.5" fill="#3e8d5f"/><circle cx="9.5" cy="9.2" r="7" fill="#4d9a6c"/><path d="M9.5 4.5L14.2 11.5H4.8z" fill="#fff"/></svg>
<svg style="left:584px;top:320.5px" width="15" height="15" viewBox="0 0 15 15"><rect x="1" y="1" width="13" height="13" rx="2" fill="#fff" stroke="#555" stroke-width="1.8"/><path d="M4 7.5H11" stroke="#555" stroke-width="1.8"/></svg>
<svg style="left:603.5px;top:318.5px" width="18" height="18" viewBox="0 0 18 18"><rect x="1.2" y="1.2" width="15" height="15" fill="#8fd68f" stroke="#4bb04f" stroke-width="2.4"/></svg>
<div class="t" style="left:628px;top:321.72px;font-size:13.33px;color:#1a1a1a;font-weight:bold">Employees</div>
<svg style="left:602.5px;top:341.9px" width="21" height="13" viewBox="0 0 21 13"><path d="M0 6L6.6 0H20V6z" fill="#fdd452"/><path d="M0 6H20V12.2H7.5z" fill="#fcc30a"/></svg>
<div class="t" style="left:628px;top:341.72px;font-size:13.33px;color:#1a1a1a">EmployeeID</div>
<svg style="left:602.5px;top:361.9px" width="21" height="13" viewBox="0 0 21 13"><path d="M0 6L6.6 0H20V6z" fill="#fdd452"/><path d="M0 6H20V12.2H7.5z" fill="#fcc30a"/></svg>
<div class="t" style="left:628px;top:361.72px;font-size:13.33px;color:#1a1a1a">LastName</div>
<svg style="left:602.5px;top:381.9px" width="21" height="13" viewBox="0 0 21 13"><path d="M0 6L6.6 0H20V6z" fill="#fdd452"/><path d="M0 6H20V12.2H7.5z" fill="#fcc30a"/></svg>
<div class="t" style="left:628px;top:381.72px;font-size:13.33px;color:#1a1a1a">FirstName</div>
<svg style="left:602.5px;top:401.9px" width="21" height="13" viewBox="0 0 21 13"><path d="M0 6L6.6 0H20V6z" fill="#fdd452"/><path d="M0 6H20V12.2H7.5z" fill="#fcc30a"/></svg>
<div class="t" style="left:628px;top:401.72px;font-size:13.33px;color:#1a1a1a">Title</div>
<svg style="left:602.5px;top:421.9px" width="21" height="13" viewBox="0 0 21 13"><path d="M0 6L6.6 0H20V6z" fill="#fdd452"/><path d="M0 6H20V12.2H7.5z" fill="#fcc30a"/></svg>
<div class="t" style="left:628px;top:421.72px;font-size:13.33px;color:#1a1a1a">TitleOfCourtesy</div>
<svg style="left:602.5px;top:441.9px" width="21" height="13" viewBox="0 0 21 13"><path d="M0 6L6.6 0H20V6z" fill="#fdd452"/><path d="M0 6H20V12.2H7.5z" fill="#fcc30a"/></svg>
<div class="t" style="left:628px;top:441.72px;font-size:13.33px;color:#1a1a1a">BirthDate</div>
<svg style="left:602.5px;top:461.9px" width="21" height="13" viewBox="0 0 21 13"><path d="M0 6L6.6 0H20V6z" fill="#fdd452"/><path d="M0 6H20V12.2H7.5z" fill="#fcc30a"/></svg>
<div class="t" style="left:628px;top:461.72px;font-size:13.33px;color:#1a1a1a">HireDate</div>
<svg style="left:602.5px;top:481.9px" width="21" height="13" viewBox="0 0 21 13"><path d="M0 6L6.6 0H20V6z" fill="#fdd452"/><path d="M0 6H20V12.2H7.5z" fill="#fcc30a"/></svg>
<div class="t" style="left:628px;top:481.72px;font-size:13.33px;color:#1a1a1a">Address</div>
<svg style="left:602.5px;top:501.9px" width="21" height="13" viewBox="0 0 21 13"><path d="M0 6L6.6 0H20V6z" fill="#fdd452"/><path d="M0 6H20V12.2H7.5z" fill="#fcc30a"/></svg>
<div class="t" style="left:628px;top:501.72px;font-size:13.33px;color:#1a1a1a">City</div>
<svg style="left:602.5px;top:521.9px" width="21" height="13" viewBox="0 0 21 13"><path d="M0 6L6.6 0H20V6z" fill="#fdd452"/><path d="M0 6H20V12.2H7.5z" fill="#fcc30a"/></svg>
<div class="t" style="left:628px;top:521.72px;font-size:13.33px;color:#1a1a1a">Region</div>
<svg style="left:602.5px;top:541.9px" width="21" height="13" viewBox="0 0 21 13"><path d="M0 6L6.6 0H20V6z" fill="#fdd452"/><path d="M0 6H20V12.2H7.5z" fill="#fcc30a"/></svg>
<div class="t" style="left:628px;top:541.72px;font-size:13.33px;color:#1a1a1a">PostalCode</div>
<svg style="left:602.5px;top:561.9px" width="21" height="13" viewBox="0 0 21 13"><path d="M0 6L6.6 0H20V6z" fill="#fdd452"/><path d="M0 6H20V12.2H7.5z" fill="#fcc30a"/></svg>
<div class="t" style="left:628px;top:561.72px;font-size:13.33px;color:#1a1a1a">Country</div>
<svg style="left:602.5px;top:581.9px" width="21" height="13" viewBox="0 0 21 13"><path d="M0 6L6.6 0H20V6z" fill="#fdd452"/><path d="M0 6H20V12.2H7.5z" fill="#fcc30a"/></svg>
<div class="t" style="left:628px;top:581.72px;font-size:13.33px;color:#1a1a1a">HomePhone</div>
<svg style="left:602.5px;top:601.9px" width="21" height="13" viewBox="0 0 21 13"><path d="M0 6L6.6 0H20V6z" fill="#fdd452"/><path d="M0 6H20V12.2H7.5z" fill="#fcc30a"/></svg>
<div class="t" style="left:628px;top:601.72px;font-size:13.33px;color:#1a1a1a">Extension</div>
<div class="a" style="left:803px;top:324.5px;width:14px;height:6.5px;background:#fefefe"></div>
<div class="a" style="left:803px;top:344.5px;width:14px;height:6.5px;background:#fefefe"></div>
<div class="a" style="left:803px;top:364.5px;width:14px;height:6.5px;background:#fefefe"></div>
<div class="a" style="left:803px;top:384.5px;width:14px;height:6.5px;background:#fefefe"></div>
<div class="a" style="left:803px;top:404.5px;width:14px;height:6.5px;background:#fefefe"></div>
<div class="a" style="left:803px;top:424.5px;width:14px;height:6.5px;background:#fefefe"></div>
<div class="a" style="left:803px;top:444.5px;width:14px;height:6.5px;background:#fefefe"></div>
<div class="a" style="left:803px;top:464.5px;width:14px;height:6.5px;background:#fefefe"></div>
<div class="a" style="left:803px;top:484.5px;width:14px;height:6.5px;background:#fefefe"></div>
<div class="a" style="left:803px;top:504.5px;width:14px;height:6.5px;background:#fefefe"></div>
<div class="a" style="left:803px;top:524.5px;width:14px;height:6.5px;background:#fefefe"></div>
<div class="a" style="left:803px;top:544.5px;width:14px;height:6.5px;background:#fefefe"></div>
<div class="a" style="left:803px;top:564.5px;width:14px;height:6.5px;background:#fefefe"></div>
<div class="a" style="left:803px;top:584.5px;width:14px;height:6.5px;background:#fefefe"></div>
<div class="a" style="left:803px;top:604.5px;width:14px;height:6.5px;background:#fefefe"></div>
<div class="a" style="left:1057px;top:274px;width:238px;height:434px;border-radius:11px;background:#fefefc;box-shadow:5px 5px 0 #a7b7cc;overflow:hidden"><div class="a" style="left:0;top:0;width:238px;height:42px;background:#c9ad4c"></div></div>
<svg style="left:1068px;top:287px" width="19" height="17" viewBox="0 0 19 17"><rect x="0.5" y="0.5" width="18" height="16" fill="#f8f4ea" stroke="#7a7a6a" stroke-width="1"/><rect x="0" y="0" width="19" height="3" fill="#666"/><path d="M1.5 6.5h4.5M1.5 9.5h4.5M1.5 12.5h4.5" stroke="#c8c4b8" stroke-width="1"/><path d="M6.8 3v13.5" stroke="#aaa"/><rect x="7.5" y="3.5" width="10.5" height="12.5" fill="#f4d9a4"/><path d="M9 6h5M9 8.5h3M9 13h5" stroke="#e0b878" stroke-width="0.8"/><circle cx="14" cy="9.5" r="2.6" fill="#5b8fcf"/><path d="M15.5 8l3-1.5" stroke="#a8c8ee" stroke-width="1.5"/></svg>
<div class="t" style="left:1097px;top:287.5px;font-size:16.9px;color:#fdf8e6;-webkit-text-stroke:0.45px #fdf8e6">Employees_Database</div>
<svg style="left:1267px;top:286px" width="19" height="19" viewBox="0 0 19 19"><circle cx="9.5" cy="9.2" r="8.5" fill="#8b7441"/><circle cx="9.5" cy="9.2" r="7" fill="#977f4a"/><path d="M9.5 4.5L14.2 11.5H4.8z" fill="#fff"/></svg>
<svg style="left:1065px;top:320.5px" width="15" height="15" viewBox="0 0 15 15"><rect x="1" y="1" width="13" height="13" rx="2" fill="#fff" stroke="#555" stroke-width="1.8"/><path d="M4 7.5H11" stroke="#555" stroke-width="1.8"/></svg>
<svg style="left:1084.5px;top:318.5px" width="18" height="18" viewBox="0 0 18 18"><rect x="1.2" y="1.2" width="15" height="15" fill="#8fd68f" stroke="#4bb04f" stroke-width="2.4"/></svg>
<div class="t" style="left:1109.5px;top:321.72px;font-size:13.33px;color:#1a1a1a;font-weight:bold">Employees_Database</div>
<svg style="left:1080px;top:340.5px" width="15" height="15" viewBox="0 0 15 15"><rect x="1" y="1" width="13" height="13" rx="2" fill="#fff" stroke="#555" stroke-width="1.8"/><path d="M4 7.5H11" stroke="#555" stroke-width="1.8"/></svg>
<svg style="left:1100px;top:339.5px" width="18" height="17" viewBox="0 0 18 17"><rect x="0" y="0" width="17.5" height="16.5" fill="#5b9bd5"/><rect x="2.5" y="2.5" width="12.5" height="11.5" fill="#6aa5dc"/><path d="M8.75 4.5V10M6 7.8L8.75 11L11.5 7.8z" stroke="#fff" stroke-width="2" fill="#fff"/></svg>
<div class="t" style="left:1124px;top:341.72px;font-size:13.33px;color:#1a1a1a;font-weight:bold">Input_Insert</div>
<svg style="left:1099px;top:361.9px" width="21" height="13" viewBox="0 0 21 13"><path d="M0 6L6.6 0H20V6z" fill="#fdd452"/><path d="M0 6H20V12.2H7.5z" fill="#fcc30a"/></svg>
<div class="t" style="left:1124.6px;top:361.72px;font-size:13.33px;color:#1a1a1a">EmployeeID</div>
<svg style="left:1099px;top:381.9px" width="21" height="13" viewBox="0 0 21 13"><path d="M0 6L6.6 0H20V6z" fill="#fdd452"/><path d="M0 6H20V12.2H7.5z" fill="#fcc30a"/></svg>
<div class="t" style="left:1124.6px;top:381.72px;font-size:13.33px;color:#1a1a1a">LastName</div>
<svg style="left:1099px;top:401.9px" width="21" height="13" viewBox="0 0 21 13"><path d="M0 6L6.6 0H20V6z" fill="#fdd452"/><path d="M0 6H20V12.2H7.5z" fill="#fcc30a"/></svg>
<div class="t" style="left:1124.6px;top:401.72px;font-size:13.33px;color:#1a1a1a">FirstName</div>
<svg style="left:1099px;top:421.9px" width="21" height="13" viewBox="0 0 21 13"><path d="M0 6L6.6 0H20V6z" fill="#fdd452"/><path d="M0 6H20V12.2H7.5z" fill="#fcc30a"/></svg>
<div class="t" style="left:1124.6px;top:421.72px;font-size:13.33px;color:#1a1a1a">Title</div>
<svg style="left:1099px;top:441.9px" width="21" height="13" viewBox="0 0 21 13"><path d="M0 6L6.6 0H20V6z" fill="#fdd452"/><path d="M0 6H20V12.2H7.5z" fill="#fcc30a"/></svg>
<div class="t" style="left:1124.6px;top:441.72px;font-size:13.33px;color:#1a1a1a">TitleOfCourtesy</div>
<svg style="left:1099px;top:461.9px" width="21" height="13" viewBox="0 0 21 13"><path d="M0 6L6.6 0H20V6z" fill="#fdd452"/><path d="M0 6H20V12.2H7.5z" fill="#fcc30a"/></svg>
<div class="t" style="left:1124.6px;top:461.72px;font-size:13.33px;color:#1a1a1a">BirthDate</div>
<svg style="left:1099px;top:481.9px" width="21" height="13" viewBox="0 0 21 13"><path d="M0 6L6.6 0H20V6z" fill="#fdd452"/><path d="M0 6H20V12.2H7.5z" fill="#fcc30a"/></svg>
<div class="t" style="left:1124.6px;top:481.72px;font-size:13.33px;color:#1a1a1a">HireDate</div>
<svg style="left:1099px;top:501.9px" width="21" height="13" viewBox="0 0 21 13"><path d="M0 6L6.6 0H20V6z" fill="#fdd452"/><path d="M0 6H20V12.2H7.5z" fill="#fcc30a"/></svg>
<div class="t" style="left:1124.6px;top:501.72px;font-size:13.33px;color:#1a1a1a">Address</div>
<svg style="left:1099px;top:521.9px" width="21" height="13" viewBox="0 0 21 13"><path d="M0 6L6.6 0H20V6z" fill="#fdd452"/><path d="M0 6H20V12.2H7.5z" fill="#fcc30a"/></svg>
<div class="t" style="left:1124.6px;top:521.72px;font-size:13.33px;color:#1a1a1a">City</div>
<svg style="left:1099px;top:541.9px" width="21" height="13" viewBox="0 0 21 13"><path d="M0 6L6.6 0H20V6z" fill="#fdd452"/><path d="M0 6H20V12.2H7.5z" fill="#fcc30a"/></svg>
<div class="t" style="left:1124.6px;top:541.72px;font-size:13.33px;color:#1a1a1a">Region</div>
<svg style="left:1099px;top:561.9px" width="21" height="13" viewBox="0 0 21 13"><path d="M0 6L6.6 0H20V6z" fill="#fdd452"/><path d="M0 6H20V12.2H7.5z" fill="#fcc30a"/></svg>
<div class="t" style="left:1124.6px;top:561.72px;font-size:13.33px;color:#1a1a1a">PostalCode</div>
<svg style="left:1099px;top:581.9px" width="21" height="13" viewBox="0 0 21 13"><path d="M0 6L6.6 0H20V6z" fill="#fdd452"/><path d="M0 6H20V12.2H7.5z" fill="#fcc30a"/></svg>
<div class="t" style="left:1124.6px;top:581.72px;font-size:13.33px;color:#1a1a1a">Country</div>
<svg style="left:1099px;top:601.9px" width="21" height="13" viewBox="0 0 21 13"><path d="M0 6L6.6 0H20V6z" fill="#fdd452"/><path d="M0 6H20V12.2H7.5z" fill="#fcc30a"/></svg>
<div class="t" style="left:1124.6px;top:601.72px;font-size:13.33px;color:#1a1a1a">HomePhone</div>
<svg style="left:1099px;top:621.9px" width="21" height="13" viewBox="0 0 21 13"><path d="M0 6L6.6 0H20V6z" fill="#fdd452"/><path d="M0 6H20V12.2H7.5z" fill="#fcc30a"/></svg>
<div class="t" style="left:1124.6px;top:621.72px;font-size:13.33px;color:#1a1a1a">Extension</div>
<svg style="left:1099px;top:641.9px" width="21" height="13" viewBox="0 0 21 13"><path d="M0 6L6.6 0H20V6z" fill="#fdd452"/><path d="M0 6H20V12.2H7.5z" fill="#fcc30a"/></svg>
<div class="t" style="left:1124.6px;top:641.72px;font-size:13.33px;color:#1a1a1a">Deprtment</div>
<svg style="left:1080px;top:660.5px" width="15" height="15" viewBox="0 0 15 15"><rect x="1" y="1" width="13" height="13" rx="2" fill="#fff" stroke="#555" stroke-width="1.8"/><path d="M4 7.5H11M7.5 4V11" stroke="#333" stroke-width="1.8"/></svg>
<svg style="left:1100px;top:659.5px" width="18" height="17" viewBox="0 0 18 17"><rect x="0" y="0" width="17.5" height="16.5" fill="#5b9bd5"/><rect x="2.5" y="2.5" width="12.5" height="11.5" fill="#6aa5dc"/><path d="M8.75 4.5V10M6 7.8L8.75 11L11.5 7.8z" stroke="#fff" stroke-width="2" fill="#fff"/></svg>
<div class="t" style="left:1124px;top:661.72px;font-size:13.33px;color:#1a1a1a;font-weight:bold">Output</div>
<svg style="left:1041px;top:344.8px" width="15" height="7" viewBox="0 0 15 7"><path d="M0 0L14.5 3.2L0 6.5z" fill="#fefefe"/></svg>
<svg style="left:1041px;top:364.8px" width="15" height="7" viewBox="0 0 15 7"><path d="M0 0L14.5 3.2L0 6.5z" fill="#fefefe"/></svg>
<svg style="left:1041px;top:384.8px" width="15" height="7" viewBox="0 0 15 7"><path d="M0 0L14.5 3.2L0 6.5z" fill="#fefefe"/></svg>
<svg style="left:1041px;top:404.8px" width="15" height="7" viewBox="0 0 15 7"><path d="M0 0L14.5 3.2L0 6.5z" fill="#fefefe"/></svg>
<svg style="left:1041px;top:424.8px" width="15" height="7" viewBox="0 0 15 7"><path d="M0 0L14.5 3.2L0 6.5z" fill="#fefefe"/></svg>
<svg style="left:1041px;top:444.8px" width="15" height="7" viewBox="0 0 15 7"><path d="M0 0L14.5 3.2L0 6.5z" fill="#fefefe"/></svg>
<svg style="left:1041px;top:464.8px" width="15" height="7" viewBox="0 0 15 7"><path d="M0 0L14.5 3.2L0 6.5z" fill="#fefefe"/></svg>
<svg style="left:1041px;top:484.8px" width="15" height="7" viewBox="0 0 15 7"><path d="M0 0L14.5 3.2L0 6.5z" fill="#fefefe"/></svg>
<svg style="left:1041px;top:504.8px" width="15" height="7" viewBox="0 0 15 7"><path d="M0 0L14.5 3.2L0 6.5z" fill="#fefefe"/></svg>
<svg style="left:1041px;top:524.8px" width="15" height="7" viewBox="0 0 15 7"><path d="M0 0L14.5 3.2L0 6.5z" fill="#fefefe"/></svg>
<svg style="left:1041px;top:544.8px" width="15" height="7" viewBox="0 0 15 7"><path d="M0 0L14.5 3.2L0 6.5z" fill="#fefefe"/></svg>
<svg style="left:1041px;top:564.8px" width="15" height="7" viewBox="0 0 15 7"><path d="M0 0L14.5 3.2L0 6.5z" fill="#fefefe"/></svg>
<svg style="left:1041px;top:584.8px" width="15" height="7" viewBox="0 0 15 7"><path d="M0 0L14.5 3.2L0 6.5z" fill="#fefefe"/></svg>
<svg style="left:1041px;top:604.8px" width="15" height="7" viewBox="0 0 15 7"><path d="M0 0L14.5 3.2L0 6.5z" fill="#fefefe"/></svg>
<svg style="left:1041px;top:624.8px" width="15" height="7" viewBox="0 0 15 7"><path d="M0 0L14.5 3.2L0 6.5z" fill="#fefefe"/></svg>
<svg style="left:1041px;top:644.8px" width="15" height="7" viewBox="0 0 15 7"><path d="M0 0L14.5 3.2L0 6.5z" fill="#fefefe"/></svg>
<div class="a" style="left:1295px;top:664.5px;width:14px;height:6.5px;background:#fefefe"></div>
<svg style="left:1090px;top:866px" width="13" height="20" viewBox="0 0 13 20"><path d="M0.5 0.5V16.5L4.3 13L7 19.2L9.3 18.2L6.7 12.2H11.8z" fill="#fff" stroke="#111" stroke-width="1"/></svg>

<!--SERVER-->
<!-- SERVER EXPLORER -->
<div class="a" style="left:1605px;top:118px;width:307px;height:833px;background:#dee6ef;border:1px solid #d3dbe4"></div>
<div class="t" style="left:1610.40px;top:131.74px;font-size:14.95px;color:#444;transform:scaleX(0.9300);transform-origin:0 0">Server Explorer</div>
<svg style="left:1861px;top:134px" width="46" height="12" viewBox="0 0 46 12">
 <path d="M0 5H9L4.5 9.8z" fill="#1e1e1e"/>
 <path d="M19.5 0.5h5v6.5h-5z" fill="none" stroke="#1e1e1e" stroke-width="1.2"/><path d="M23.5 0.5v6.5" stroke="#1e1e1e" stroke-width="1.6"/>
 <path d="M18 7.3h8.5M22 7.3v4.7" stroke="#1e1e1e" stroke-width="1.3"/>
 <path d="M35.5 1L44.5 9.5M44.5 1L35.5 9.5" stroke="#111" stroke-width="2.7"/>
</svg>
<div class="a" style="left:1606px;top:160px;width:305px;height:50px;background:#f5f6f9"></div>
<div class="a" style="left:1607px;top:210px;width:303px;height:1px;background:#dcdfe3"></div>
<div class="a" style="left:1607px;top:211px;width:303px;height:739px;background:#fefefd"></div>
<div class="t" style="left:1617.80px;top:177.74px;font-size:14.95px;color:#1e1e1e;transform:scaleX(1.0288);transform-origin:0 0"><u>C</u>onfigure</div>
<svg style="left:1687px;top:184px" width="8" height="5" viewBox="0 0 8 5"><path d="M0 0H7L3.5 3.5z" fill="#222"/></svg>
<svg style="left:1706px;top:174px" width="27" height="22" viewBox="0 0 27 22">
 <path d="M5 8.5 A8.5 8.5 0 0 1 20.5 6" fill="none" stroke="#3cb44a" stroke-width="3"/>
 <path d="M17 5.5L24.5 3.5L23.5 11z" fill="#3cb44a"/>
 <path d="M22 13.5 A8.5 8.5 0 0 1 6.5 16" fill="none" stroke="#3cb44a" stroke-width="3"/>
 <path d="M10 16.5L2.5 18.5L3 11z" fill="#3cb44a"/>
</svg>
<svg style="left:1743px;top:172px" width="20" height="26" viewBox="0 0 20 26">
 <rect x="8.5" y="3" width="10" height="21.5" fill="#f4f4f4" stroke="#666" stroke-width="1.2"/>
 <path d="M10 6.5h7M10 9.5h7M10 12.5h7" stroke="#888"/><rect x="10" y="15" width="7" height="8" fill="#fff" stroke="#999" stroke-width="0.8"/>
 <rect x="0.5" y="0.5" width="8.5" height="8.5" fill="#f5dc7a"/><circle cx="4.75" cy="4.75" r="2.5" fill="#fff3b0"/>
</svg>
<div class="a" style="left:1778px;top:170px;width:1px;height:29px;background:#c9ccd2"></div>
<svg style="left:1790px;top:175px" width="23" height="21" viewBox="0 0 23 21">
 <rect x="0.6" y="0.6" width="21.8" height="19.8" fill="#fafafa" stroke="#aaa" stroke-width="1.2"/>
 <rect x="0.6" y="0.6" width="21.8" height="3" fill="#bbb"/>
 <path d="M12 3.5v17" stroke="#bbb"/>
 <rect x="2.5" y="10" width="7" height="2.5" fill="#aaa"/><path d="M14 7.5h6M14 10.5h6M14 13.5h6M14 16.5h6" stroke="#bbb"/>
</svg>
<svg style="left:1827px;top:172px" width="25" height="25" viewBox="0 0 25 25">
 <rect x="0.6" y="5.6" width="19" height="18.8" fill="#fafafa" stroke="#aaa" stroke-width="1.2"/>
 <rect x="0.6" y="5.6" width="11" height="3" fill="#bbb"/>
 <path d="M4 9v15M5 12h13M5 15.5h13M5 19h13M5 22.5h13" stroke="#bbb"/>
 <circle cx="18" cy="6.5" r="5.8" fill="#fafafa" stroke="#aaa" stroke-width="1.2"/><path d="M18 3v3.7h3" stroke="#999" fill="none"/>
</svg>
<svg style="left:1864px;top:172px" width="25" height="26" viewBox="0 0 25 26">
 <rect x="1.5" y="0.6" width="14" height="9.5" fill="#fafafa" stroke="#aaa" stroke-width="1.2"/>
 <path d="M8.5 10v3M3 13.5h11" stroke="#aaa" stroke-width="1.3"/>
 <path d="M8.5 14v6M0.5 22.5h17" stroke="#bbb" stroke-width="1.2" stroke-dasharray="2 1"/>
 <path d="M12 17l4 4.5l8-9" stroke="#c8c8c8" stroke-width="2.2" fill="none"/>
</svg>
<div class="a" style="left:1898px;top:170px;width:1px;height:29px;background:#c9ccd2"></div>
<!-- tree -->
<svg style="left:1610px;top:208px" width="110" height="70" viewBox="0 0 110 70">
 <defs><linearGradient id="mg" x1="0" y1="0" x2="0" y2="1"><stop offset="0" stop-color="#fff"/><stop offset="1" stop-color="#dcdcdc"/></linearGradient></defs>
 <g stroke="#777" stroke-width="1" stroke-dasharray="1 1" fill="none">
  <path d="M17.5 14H25"/><path d="M35.5 23.5V28.5"/><path d="M41.5 34H49"/><path d="M59.5 43V54.5H74"/>
 </g>
 <rect x="6.8" y="9.3" width="10.2" height="10.2" rx="1.5" fill="url(#mg)" stroke="#a0a0a0"/><path d="M9 14.5h6" stroke="#4a5a78" stroke-width="1.4"/>
 <rect x="30.8" y="29.1" width="10.2" height="10.2" rx="1.5" fill="url(#mg)" stroke="#a0a0a0"/><path d="M33 34.3h6" stroke="#4a5a78" stroke-width="1.4"/>
 <g id="srvA">
  <rect x="25.7" y="6.5" width="9" height="17" fill="#b8c6dc" stroke="#2f3746" stroke-width="1.3"/>
  <rect x="35.5" y="4" width="9" height="16.5" fill="#b8c6dc" stroke="#2f3746" stroke-width="1.3"/>
  <rect x="27.5" y="8" width="5" height="2" fill="#3cc070"/><rect x="37.5" y="5.5" width="5" height="2" fill="#3cc070"/>
  <path d="M27.5 13h5M27.5 16h5M27.5 19h5M37.5 11h5M37.5 14h5M37.5 17h5" stroke="#5a6a88" stroke-width="0.9"/>
  <path d="M30 10v11M40 8v10" stroke="#8898b8" stroke-width="0.8"/>
 </g>
 <use href="#srvA" x="24" y="20"/>
 <path d="M74.5 45.5L82 44.5h6.5V60.5L82 63z" fill="#c8cce0" stroke="#50587a" stroke-width="1.2"/>
 <path d="M75 45.5L82 44.5V63L75 61z" fill="#a8b0cc"/>
 <rect x="83" y="48.5" width="4.5" height="3" fill="#5a8a78"/>
 <path d="M90 56l3 3l-3 3.5l-3-3.5z" fill="#2f9a40"/>
</svg>
<div class="t" style="left:1661.80px;top:213.74px;font-size:14.95px;color:#3a3a3a;transform:scaleX(0.8773);transform-origin:0 0">Server Connections</div>
<div class="t" style="left:1685.60px;top:233.28px;font-size:15.50px;color:#3a3a3a;transform:scaleX(0.8802);transform-origin:0 0">DEFAULT</div>
<div class="t" style="left:1709.50px;top:254.74px;font-size:14.95px;color:#3a3a3a;transform:scaleX(0.9333);transform-origin:0 0">HTTPS://ASTWKS251:9260</div>
<!-- bottom tabs -->
<div class="a" style="left:1606px;top:953px;width:130px;height:38px;background:#d7dadd"></div>
<div class="t" style="left:1621.00px;top:964.05px;font-size:15.78px;color:#2b2b2b;transform:scaleX(0.8920);transform-origin:0 0">Server Explorer</div>
<div class="t" style="left:1752.50px;top:964.05px;font-size:15.78px;color:#2b2b2b;transform:scaleX(0.9032);transform-origin:0 0">Sql Snippets</div>


</body></html>
